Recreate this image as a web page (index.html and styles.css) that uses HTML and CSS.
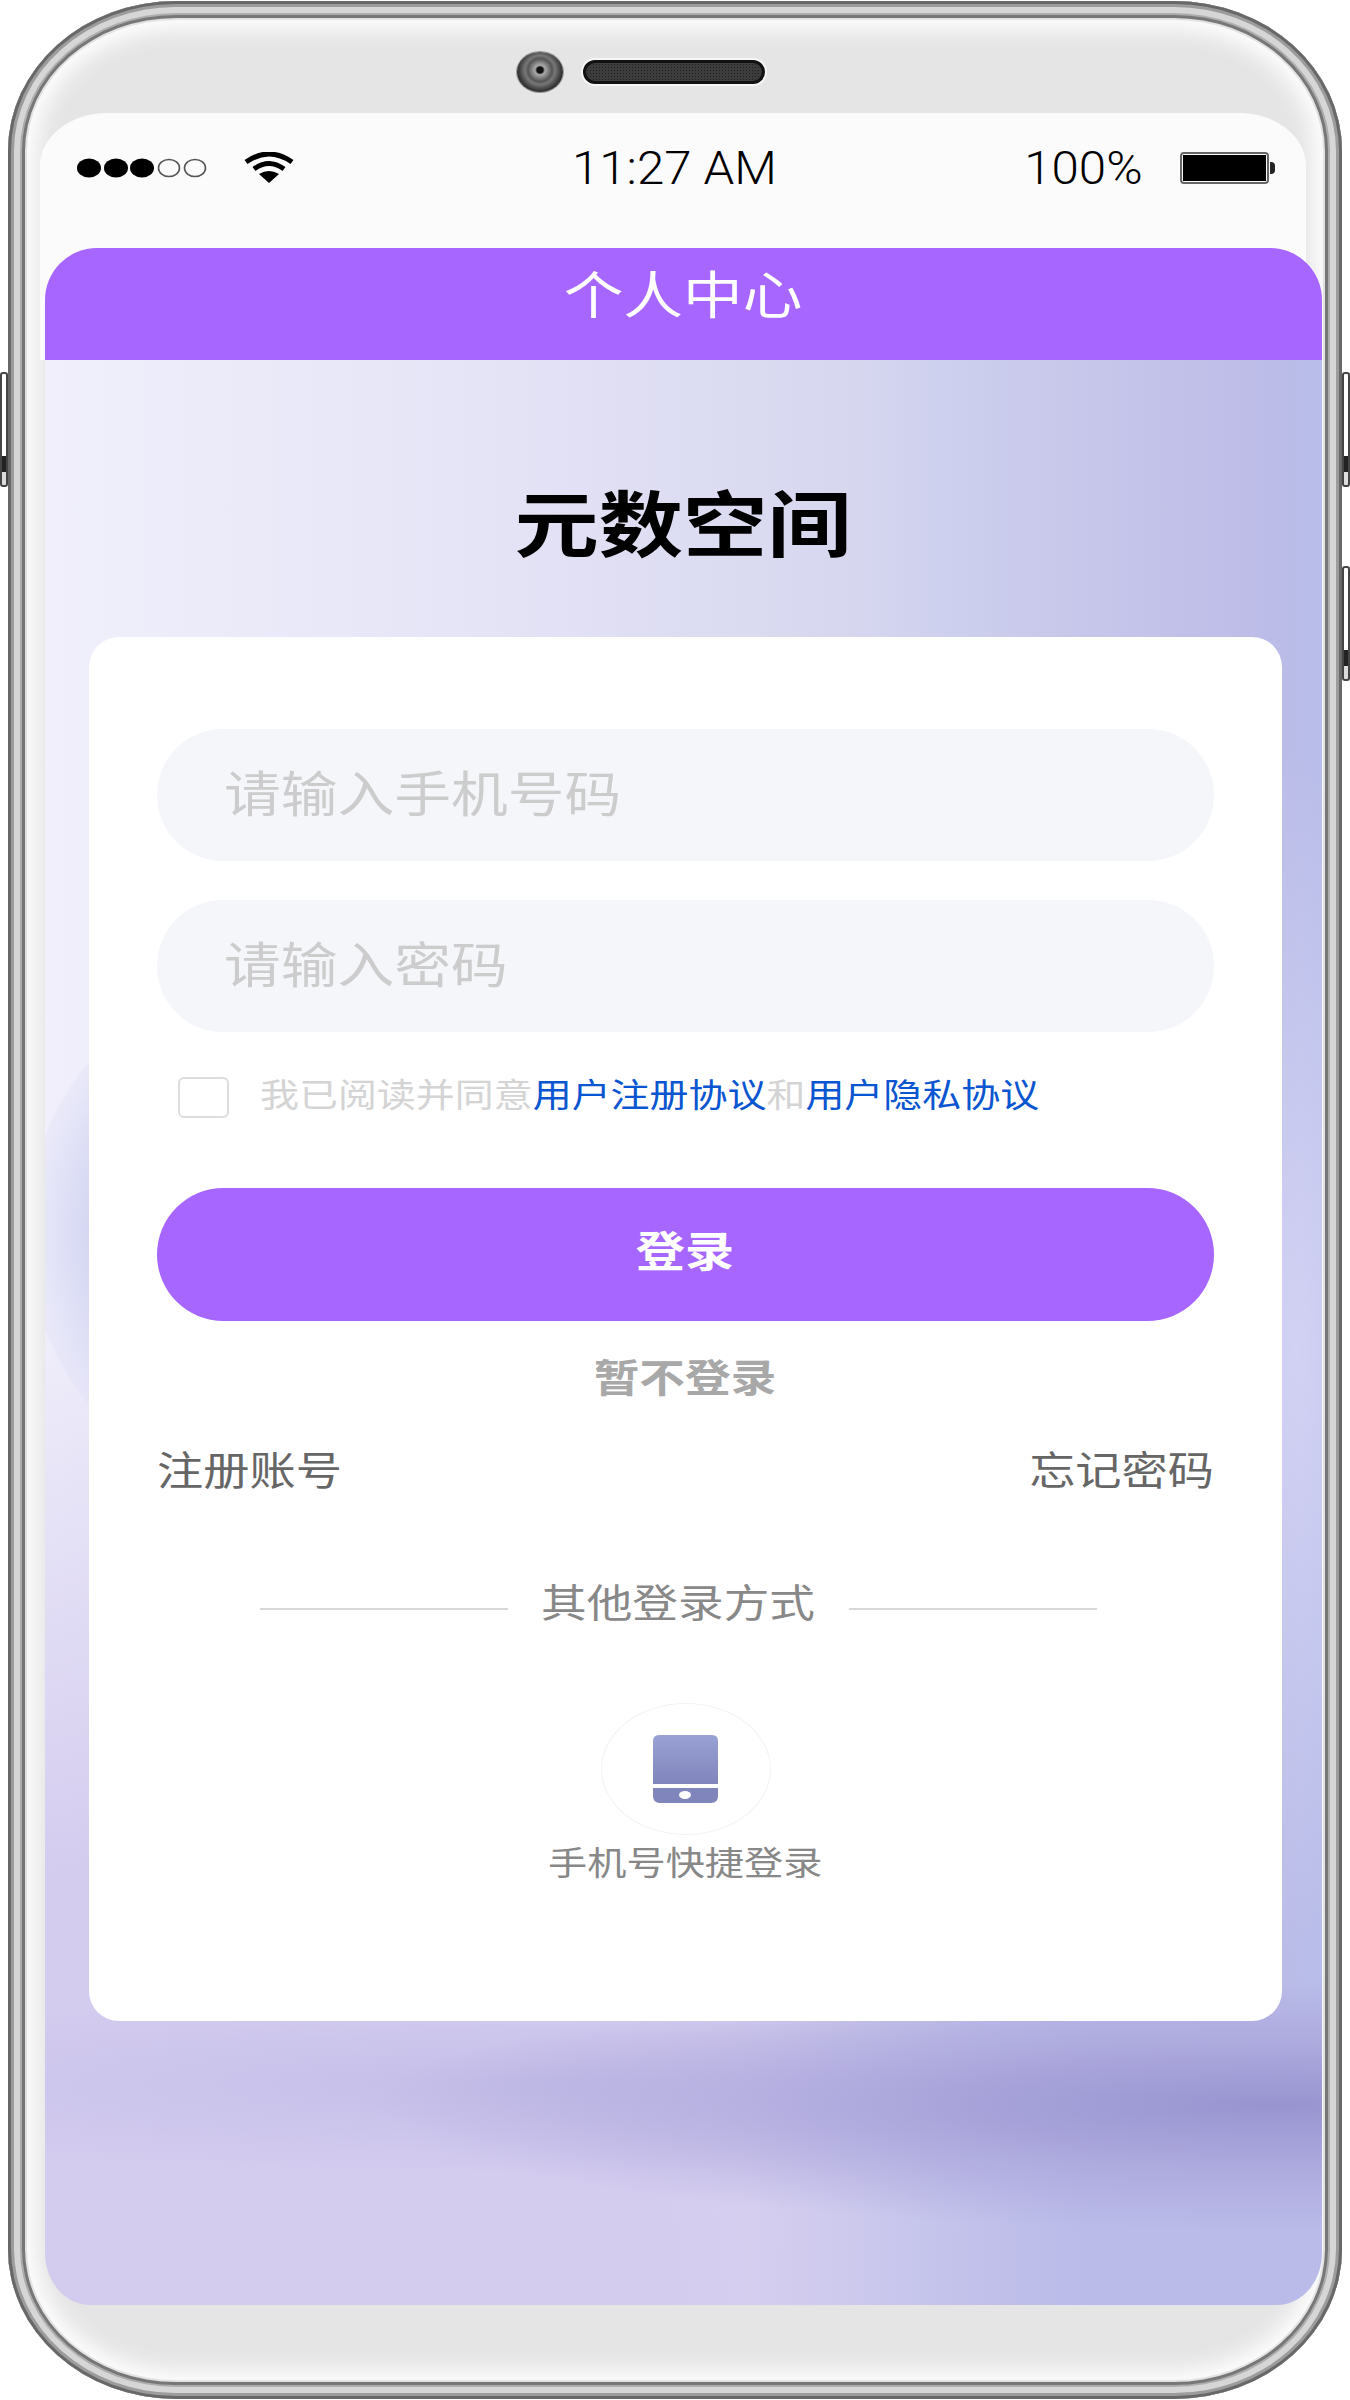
FILE: index.html
```html
<!DOCTYPE html>
<html lang="zh-CN">
<head>
  <meta charset="UTF-8" />
  <title>个人中心</title>
  <link rel="stylesheet" href="styles.css">
</head>
<body>
  <div class="phone">
    <span class="side-btn left-btn"></span>
    <span class="side-btn right-btn-1"></span>
    <span class="side-btn right-btn-2"></span>

    <div class="bezel-top">
      <span class="camera"></span>
      <span class="speaker"></span>
    </div>

    <div class="status-bar">
      <div class="status-left">
        <svg class="signal" width="130" height="20" viewBox="0 0 130 20">
          <ellipse cx="12" cy="10" rx="12" ry="9.5" fill="#000"/>
          <ellipse cx="39" cy="10" rx="12" ry="9.5" fill="#000"/>
          <ellipse cx="65" cy="10" rx="12" ry="9.5" fill="#000"/>
          <ellipse cx="92" cy="10" rx="10.5" ry="8.5" fill="none" stroke="#555" stroke-width="1.6"/>
          <ellipse cx="118" cy="10" rx="10.5" ry="8.5" fill="none" stroke="#555" stroke-width="1.6"/>
        </svg>
        <svg class="wifi" width="50" height="32" viewBox="0 0 50 32">
          <path d="M2 10 Q25 -6 48 10" fill="none" stroke="#000" stroke-width="5"/>
          <path d="M10 17 Q25 6 40 17" fill="none" stroke="#000" stroke-width="5"/>
          <path d="M25 31 L15 22 Q25 16 35 22 Z" fill="#000"/>
        </svg>
      </div>
      <span class="time">11:27 AM</span>
      <div class="status-right">
        <span class="percent">100%</span>
        <span class="battery"><span class="battery-fill"></span></span>
      </div>
    </div>

    <div class="header-wrap">
      <div class="header"><span class="wide">个人中心</span></div>
    </div>

    <div class="screen">
      <h1 class="title"><span class="wide">元数空间</span></h1>

      <div class="card">
        <div class="field"><span class="wide-left">请输入手机号码</span></div>
        <div class="field"><span class="wide-left">请输入密码</span></div>

        <div class="agree">
          <span class="check"></span>
          <span class="wide-left agree-text">我已阅读并同意<a>用户注册协议</a>和<a>用户隐私协议</a></span>
        </div>

        <button class="login-btn"><span class="wide">登录</span></button>
        <div class="skip"><span class="wide">暂不登录</span></div>

        <div class="links">
          <span class="wide-left">注册账号</span>
          <span class="wide-right">忘记密码</span>
        </div>

        <div class="divider">
          <span class="line"></span>
          <span class="wide divider-text">其他登录方式</span>
          <span class="line"></span>
        </div>

        <div class="quick-login">
          <div class="quick-icon">
            <svg width="65" height="68" viewBox="0 0 65 68">
              <defs>
                <linearGradient id="tablet" x1="0" y1="0" x2="0" y2="1">
                  <stop offset="0" stop-color="#9aa2d4"/>
                  <stop offset="1" stop-color="#8085bb"/>
                </linearGradient>
              </defs>
              <path d="M6 0H59Q65 0 65 6V49H0V6Q0 0 6 0Z" fill="url(#tablet)"/>
              <path d="M0 53H65V61Q65 68 58 68H7Q0 68 0 61Z" fill="#8085bb"/>
              <ellipse cx="32" cy="60" rx="6" ry="4" fill="#fff"/>
            </svg>
          </div>
          <div class="quick-label"><span class="wide">手机号快捷登录</span></div>
        </div>
      </div>
    </div>
  </div>
</body>
</html>
```

FILE: styles.css
```css
body {
  margin: 0;
  background: #fff;
  font-family: "Liberation Sans", "Noto Sans CJK SC", sans-serif;
}

.wide,
.wide-left,
.wide-right {
  display: inline-block;
  transform: scaleX(1.17);
  white-space: nowrap;
}

.wide-left {
  transform-origin: left center;
}

.wide-right {
  transform-origin: right center;
}

.phone {
  position: relative;
  box-sizing: border-box;
  width: 1334px;
  height: 2398px;
  margin: 1px 8px;
  padding: 0 20px 0 37px;
  border-radius: 168px / 150px;
  background: #e6e5e6;
  box-shadow:
    inset 0 0 0 3px #686868,
    inset 0 0 0 6px #9c9c9c,
    inset 0 0 0 12px #d6d6d6,
    inset 0 0 0 14px #adadad,
    inset 0 0 0 17px #777,
    inset 0 0 0 19px #e2e2e2,
    inset 0 0 22px 28px #fff;
}

.side-btn {
  position: absolute;
  width: 8px;
  height: 115px;
  box-sizing: border-box;
  border: 2px solid #444;
  border-radius: 3px;
  background: linear-gradient(180deg, #fff 0 74%, #222 74% 88%, #ddd 88%);
}

.left-btn {
  left: -8px;
  top: 371px;
}

.right-btn-1 {
  right: -8px;
  top: 371px;
}

.right-btn-2 {
  right: -8px;
  top: 565px;
}

.bezel-top {
  display: flex;
  align-items: center;
  gap: 20px;
  height: 112px;
  padding: 30px 0 0 472px;
  box-sizing: border-box;
}

.camera {
  position: relative;
  width: 46px;
  height: 40px;
  border-radius: 50%;
  background: radial-gradient(ellipse at 50% 45%, #111 0 3px, #aaa 5px, #555 12px, #777 15px, #333 22px);
  box-shadow: 0 0 0 1px #999;
}

.speaker {
  width: 182px;
  height: 24px;
  box-sizing: border-box;
  border: 3px solid #111;
  border-radius: 12px;
  background: #3c3c3c radial-gradient(circle, #222 1px, transparent 1px) 0 0 / 3px 3px;
  box-shadow: 0 0 0 2px #f6f6f6;
}

.status-bar {
  display: flex;
  align-items: center;
  justify-content: space-between;
  position: relative;
  height: 135px;
  margin: 0 16px 0 -5px;
  padding: 0 37px 25px 37px;
  box-sizing: border-box;
  background: #fbfbfb;
  border-radius: 67px 67px 0 0 / 53px 53px 0 0;
}

.status-left {
  display: flex;
  align-items: center;
  gap: 37px;
}

.time,
.percent {
  display: block;
  font-family: Roboto, "Liberation Sans", sans-serif;
  font-weight: 300;
  font-size: 46px;
  color: #000;
  transform: scaleX(1.07);
}

.time {
  position: absolute;
  left: 532px;
  transform-origin: left center;
}

.percent {
  transform-origin: right center;
}

.status-right {
  display: flex;
  align-items: center;
  gap: 37px;
}

.battery {
  position: relative;
  display: block;
  width: 89px;
  height: 32px;
  padding: 1px;
  box-sizing: border-box;
  border: 2px solid #666;
  border-radius: 4px;
}

.battery::after {
  content: "";
  position: absolute;
  right: -8px;
  top: 8px;
  width: 5px;
  height: 12px;
  border-radius: 0 4px 4px 0;
  background: #222;
}

.battery-fill {
  display: block;
  height: 100%;
  background: #000;
}

.header-wrap {
  margin: 0 16px 0 -5px;
  background: #fbfbfb;
}

.header {
  height: 112px;
  margin: 0 -16px 0 5px;
  border-radius: 52px 52px 0 0;
  background: #a666ff;
  color: #fff;
  font-size: 51px;
  line-height: 98px;
  text-align: center;
}

.screen {
  height: 1945px;
  box-sizing: border-box;
  overflow: hidden;
  border-radius: 0 0 45px 45px / 0 0 52px 52px;
  background:
    radial-gradient(ellipse 900px 125px at 1230px 1745px, rgba(152, 148, 208, 1), rgba(168, 163, 218, 0.7) 50%, rgba(170, 165, 220, 0) 100%),
    radial-gradient(ellipse 800px 90px at 500px 1725px, rgba(180, 175, 225, 0.5), rgba(180, 175, 225, 0) 100%),
    linear-gradient(90deg, rgba(186, 188, 233, 0) 55%, #babbe9 82%) 0 100% / 100% 290px no-repeat,
    radial-gradient(ellipse 1050px 1000px at 150px 1945px, #d4ccef 45%, rgba(212, 204, 239, 0) 100%),
    radial-gradient(ellipse 130px 600px at 1250px 990px, rgba(214, 214, 245, 0.85), rgba(214, 214, 245, 0) 100%),
    radial-gradient(ellipse 320px 290px at 300px 873px, rgba(196, 200, 238, 0.8) 72%, rgba(214, 217, 244, 0.4) 94%, rgba(218, 220, 246, 0.3) 99%, rgba(218, 220, 246, 0) 100%),
    linear-gradient(90deg, #f0effb 0, #e6e5f7 408px, #d6d6ef 816px, #cdd0ee 898px, #c6c5ea 1061px, #bcbce8 1224px, #b8bde9 100%);
}

.title {
  margin: 0;
  padding: 123px 0 68px;
  height: 86px;
  line-height: 86px;
  font-size: 72px;
  font-weight: bold;
  color: #000;
  text-align: center;
}

.card {
  box-sizing: border-box;
  height: 1384px;
  margin: 0 40px 0 44px;
  padding: 92px 68px 0;
  border-radius: 30px;
  background: #fff;
}

.field {
  height: 132px;
  margin-bottom: 39px;
  padding-left: 67px;
  border-radius: 66px;
  background: #f4f6fa;
  color: #ccc;
  font-size: 48.5px;
  line-height: 132px;
}

.agree {
  display: flex;
  align-items: center;
  height: 41px;
  margin: 45px 0 70px 21px;
  color: #d4d4d4;
  font-size: 33.3px;
  line-height: 41px;
}

.agree-text {
  margin-top: -4px;
}

.agree a {
  color: #0a55d0;
}

.check {
  width: 51px;
  height: 41px;
  margin-right: 31px;
  box-sizing: border-box;
  border: 2px solid #ddd;
  border-radius: 6px;
}

.login-btn {
  display: block;
  width: 100%;
  height: 133px;
  padding: 0 0 12px;
  border: none;
  border-radius: 67px;
  background: #a666ff;
  color: #fff;
  font-family: inherit;
  font-size: 42px;
  font-weight: bold;
}

.skip {
  height: 56px;
  margin-top: 28px;
  color: #a8a8a8;
  font-size: 39px;
  font-weight: bold;
  line-height: 60px;
  text-align: center;
}

.links {
  display: flex;
  justify-content: space-between;
  height: 50px;
  margin-top: 39px;
  color: #666;
  font-size: 39.5px;
  line-height: 54px;
}

.divider {
  display: flex;
  align-items: center;
  justify-content: space-between;
  height: 56px;
  margin-top: 85px;
  padding: 0 117px 0 103px;
  color: #888;
  font-size: 39px;
  line-height: 44px;
}

.divider-text {
  margin-bottom: 6px;
}

.line {
  width: 248px;
  height: 2px;
  margin-top: 4px;
  background: #d8d8d8;
}

.quick-login {
  margin-top: 68px;
  text-align: center;
}

.quick-icon {
  display: flex;
  align-items: center;
  justify-content: center;
  box-sizing: border-box;
  width: 170px;
  height: 132px;
  margin: 0 auto;
  border: 1px solid #f3f3f3;
  border-radius: 50%;
}

.quick-label {
  margin-top: 6px;
  color: #888;
  font-size: 33.5px;
  line-height: 46px;
}
```
